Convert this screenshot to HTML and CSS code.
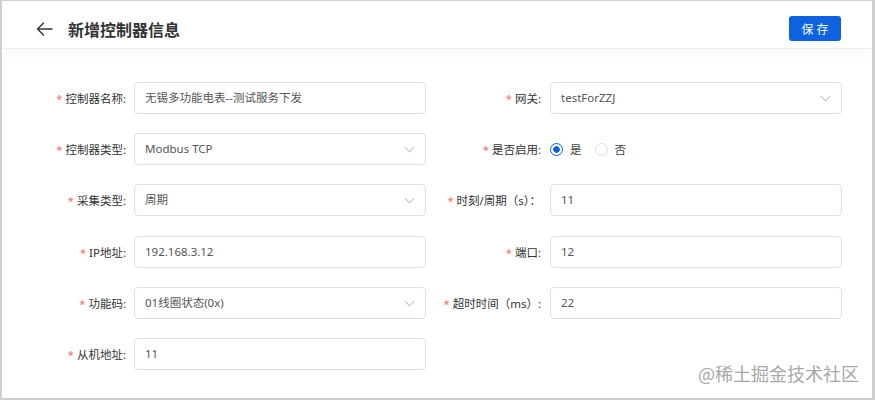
FILE: index.html
```html
<!DOCTYPE html>
<html>
    <head>
        <title>新增控制器信息</title>
        <meta charset="UTF-8">
        <meta name="viewport" content="width=device-width, initial-scale=1.0">
        <link rel="stylesheet" href="styles.css">
    </head>
    <body>
        <div class="pagina">
            <div class="cabecera">
                <a class="volver" href="#">
                    <svg width="17" height="14" viewBox="0 0 17 14">
                        <path d="M16 7H1.5M7.5 1L1.5 7L7.5 13" fill="none" stroke="#333" stroke-width="1.4" stroke-linecap="round" stroke-linejoin="round"/>
                    </svg>
                </a>
                <h1 class="titulo">新增控制器信息</h1>
                <button type="button" class="btn-guardar">保存</button>
            </div>

            <form class="formulario" action="javascript:void(0);">
                <div class="campo">
                    <label class="etiqueta izq"><span class="req">*</span>控制器名称:</label>
                    <div class="entrada">无锡多功能电表--测试服务下发</div>
                </div>
                <div class="campo">
                    <label class="etiqueta der"><span class="req">*</span>网关:</label>
                    <div class="entrada selector">testForZZJ<i class="flecha"></i></div>
                </div>

                <div class="campo">
                    <label class="etiqueta izq"><span class="req">*</span>控制器类型:</label>
                    <div class="entrada selector">Modbus TCP<i class="flecha"></i></div>
                </div>
                <div class="campo">
                    <label class="etiqueta der"><span class="req">*</span>是否启用:</label>
                    <div class="radios">
                        <span class="radio activo"></span><span class="radio-txt">是</span>
                        <span class="radio"></span><span class="radio-txt">否</span>
                    </div>
                </div>

                <div class="campo">
                    <label class="etiqueta izq"><span class="req">*</span>采集类型:</label>
                    <div class="entrada selector">周期<i class="flecha"></i></div>
                </div>
                <div class="campo">
                    <label class="etiqueta der"><span class="req">*</span>时刻/周期（s）：</label>
                    <div class="entrada">11</div>
                </div>

                <div class="campo">
                    <label class="etiqueta izq"><span class="req">*</span>IP地址:</label>
                    <div class="entrada">192.168.3.12</div>
                </div>
                <div class="campo">
                    <label class="etiqueta der"><span class="req">*</span>端口:</label>
                    <div class="entrada">12</div>
                </div>

                <div class="campo">
                    <label class="etiqueta izq"><span class="req">*</span>功能码:</label>
                    <div class="entrada selector">01线圈状态(0x)<i class="flecha"></i></div>
                </div>
                <div class="campo">
                    <label class="etiqueta der"><span class="req">*</span>超时时间（ms）:</label>
                    <div class="entrada">22</div>
                </div>

                <div class="campo">
                    <label class="etiqueta izq"><span class="req">*</span>从机地址:</label>
                    <div class="entrada">11</div>
                </div>
            </form>

            <div class="marca">@稀土掘金技术社区</div>
        </div>
    </body>
</html>
```

FILE: styles.css
```css
body{
    margin: 0;
    font-family: "Noto Sans", "Noto Sans CJK SC", sans-serif;
}
.pagina{
    position: relative;
    width: 875px;
    height: 400px;
    box-sizing: border-box;
    border: 2px solid #cfcfcf;
    border-top-width: 1px;
    border-right-width: 3px;
    background: #fff;
    overflow: hidden;
}
.cabecera{
    display: flex;
    align-items: center;
    height: 48px;
    box-sizing: border-box;
    padding: 8px 31px 0 34px;
    border-bottom: 1px solid #ededed;
    box-shadow: 0 3px 12px rgba(0,0,0,0.035);
}
.volver{
    display: flex;
    width: 17px;
    height: 14px;
}
.titulo{
    margin: 0 0 0 15px;
    font-size: 16px;
    font-weight: bold;
    color: #333;
    flex: 1;
    font-family: "Noto Sans CJK SC", sans-serif;
}
.btn-guardar{
    width: 52px;
    height: 25px;
    border: none;
    border-radius: 3px;
    background: #0d62e0;
    color: #fff;
    font-size: 12px;
    letter-spacing: 3px;
    padding: 0 0 0 3px;
    font-family: "Noto Sans CJK SC", sans-serif;
}

.formulario{
    display: grid;
    grid-template-columns: 424px 416px;
    row-gap: 19.2px;
    padding-top: 33px;
}
.campo{
    display: flex;
    align-items: center;
    height: 32px;
}
.etiqueta{
    text-align: right;
    font-size: 11.5px;
    color: #333;
    white-space: nowrap;
}
.izq{
    width: 124px;
    margin-right: 8px;
}
.der{
    width: 115px;
    margin-right: 9px;
}
.req{
    color: #f56c6c;
    margin-right: 3px;
    font-size: 11px;
}
.entrada{
    position: relative;
    width: 292px;
    height: 32px;
    box-sizing: border-box;
    border: 1px solid #dcdfe6;
    border-radius: 4px;
    padding-left: 10px;
    line-height: 30px;
    font-size: 11.5px;
    color: #555;
}
.flecha{
    position: absolute;
    right: 12px;
    top: 10px;
    width: 6px;
    height: 6px;
    border-right: 1px solid #c0c4cc;
    border-bottom: 1px solid #c0c4cc;
    transform: rotate(45deg);
}
.radios{
    display: flex;
    align-items: center;
    font-size: 11.5px;
    color: #444;
}
.radio{
    width: 13px;
    height: 13px;
    box-sizing: border-box;
    border: 1px solid #dcdfe6;
    border-radius: 50%;
    margin-right: 7px;
}
.radio.activo{
    border-color: #0d62e0;
    background: radial-gradient(circle, #0d62e0 0 3px, #fff 3.5px);
}
.radio-txt{
    margin-right: 13px;
}
.marca{
    position: absolute;
    right: 13px;
    bottom: 12px;
    font-size: 18px;
    color: #a8a8a8;
    font-family: "Noto Sans CJK SC", sans-serif;
}
```
